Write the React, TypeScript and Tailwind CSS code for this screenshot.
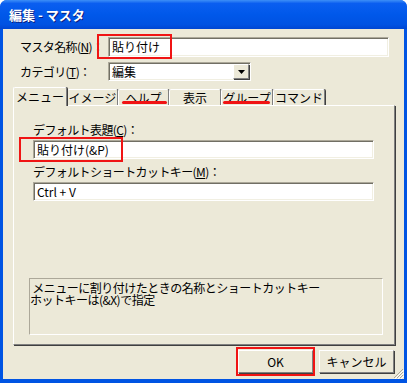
import type { ReactNode } from 'react';

const jp = "font-['MS_UI_Gothic','Noto_Sans_CJK_JP','Liberation_Sans',sans-serif]";

const sunken =
  'bg-white border border-t-[#aca899] border-l-[#aca899] border-r-white border-b-white shadow-[inset_1px_1px_0_#716f64,inset_-1px_-1px_0_#f1efe2]';

const Field = ({ children, className = '' }: { children?: ReactNode; className?: string }) => (
  <div className={`${sunken} flex items-center px-[3px] text-[12px] leading-none text-black ${className}`}>
    {children}
  </div>
);

const Tab = ({ label, active = false, width }: { label: string; active?: boolean; width: string }) => (
  <div
    className={`${width} flex items-center justify-center rounded-t-[2px] border-l border-t border-l-white border-t-white border-r border-r-[#808080] shadow-[1px_0_0_#404040] bg-[#ece9d8] text-[12px] leading-none ${
      active ? 'relative z-10 h-[19px] -mb-px pb-px' : 'h-[16px]'
    }`}
  >
    {label}
  </div>
);

const Button = ({ children }: { children: ReactNode }) => (
  <div className="w-[75px] h-[23px] flex items-center justify-center bg-[#ece9d8] border border-t-white border-l-white border-r-[#808080] border-b-[#808080] shadow-[1px_1px_0_#404040] text-[12px] leading-none">
    {children}
  </div>
);

const note = ' メニューに割り付けたときの名称とショートカットキー\nホットキーは(&X)で指定';

const App = () => {
  return (
    <div className={`w-[407px] h-[383px] flex flex-col bg-[#0054e3] rounded-t-[7px] overflow-hidden text-black ${jp}`}>
      <div className="h-[29px] shrink-0 flex items-center pl-[9px] bg-[linear-gradient(to_bottom,#3d8ff7_0%,#0a5ef0_12%,#0058ea_50%,#0052e2_85%,#0046d2_100%)]">
        <span className="text-white font-bold text-[13px] leading-none whitespace-pre [text-shadow:1px_1px_0_#0a1e80]">
          編集 - マスタ
        </span>
      </div>

      <div className="relative mx-[3px] mb-[4px] flex-1 bg-[#ece9d8] flex flex-col pt-[8px]">
        <div className="flex items-center pl-[17px] h-[20px]">
          <div className="w-[88px] text-[12px] leading-none tracking-[-0.6px]">
            マスタ名称(<span className="underline">N</span>)：
          </div>
          <Field className="w-[281px] h-[20px]">貼り付け</Field>
        </div>

        <div className="flex items-center pl-[17px] h-[19px] mt-[5px]">
          <div className="w-[88px] text-[12px] leading-none tracking-[-0.6px]">
            カテゴリ(<span className="underline">T</span>)：
          </div>
          <Field className="w-[143px] h-[19px] justify-between pr-[1px]">
            <span>編集</span>
            <span className="w-[16px] h-[15px] flex items-center justify-center bg-[#ece9d8] border border-t-white border-l-white border-r-[#808080] border-b-[#808080] shadow-[1px_1px_0_#404040]">
              <svg width="7" height="4" viewBox="0 0 7 4">
                <path d="M0 0h7L3.5 4z" fill="#000" />
              </svg>
            </span>
          </Field>
        </div>

        <div className="flex items-end h-[18px] mt-[6px] pl-[10px]">
          <Tab label="メニュー" active width="w-[54px]" />
          <Tab label="イメージ" width="w-[51px]" />
          <Tab label="ヘルプ" width="w-[51px]" />
          <Tab label="表示" width="w-[52px]" />
          <Tab label="グループ" width="w-[52px]" />
          <Tab label="コマンド" width="w-[52px]" />
        </div>

        <div className="ml-[10px] w-[382px] h-[240px] flex flex-col border border-t-white border-l-white border-r-[#808080] border-b-[#808080] shadow-[1px_1px_0_#404040] pl-[19px] pt-[18px]">
          <div className="text-[12px] leading-none h-[15px] tracking-[-0.6px]">
            デフォルト表題(<span className="underline">C</span>)：
          </div>
          <Field className="w-[341px] h-[19px] mt-px">貼り付け(&amp;P)</Field>
          <div className="text-[12px] leading-none h-[15px] mt-[7px] tracking-[-0.6px]">
            デフォルトショートカットキー(<span className="underline">M</span>)：
          </div>
          <Field className="w-[341px] h-[19px] mt-px">Ctrl + V</Field>

          <div className="-ml-[4px] mt-[77px] w-[354px] h-[57px] border border-t-[#aca899] border-l-[#aca899] border-r-white border-b-white text-[12px] leading-[12px] pt-[3px] whitespace-pre tracking-[-0.5px]">
            {note}
          </div>
        </div>

        <div className="flex justify-end gap-[6px] pr-[10px] mt-[5px]">
          <Button>OK</Button>
          <Button>キャンセル</Button>
        </div>

        {/* size grip */}
        <svg className="absolute right-0 bottom-0" width="11" height="11" viewBox="0 0 11 11">
          <path d="M10 1L1 10M10 4L4 10M10 7L7 10" stroke="#aca899" strokeWidth="1" />
          <path d="M11 2L2 11M11 5L5 11M11 8L8 11" stroke="#fff" strokeWidth="1" />
        </svg>

        {/* red annotations */}
        <div className="absolute left-[94px] top-[5px] w-[75px] h-[25px] border-2 border-[#f01414]" />
        <div className="absolute left-[16px] top-[108px] w-[104px] h-[25px] border-2 border-[#f01414]" />
        <div className="absolute left-[233px] top-[318px] w-[79px] h-[29px] border-2 border-[#f01414]" />
        <div className="absolute left-[119px] top-[72px] w-[45px] h-[3px] bg-[#f01414] rounded-full z-20" />
        <div className="absolute left-[220px] top-[72px] w-[47px] h-[3px] bg-[#f01414] rounded-full z-20" />
      </div>
    </div>
  );
};

export default App;
